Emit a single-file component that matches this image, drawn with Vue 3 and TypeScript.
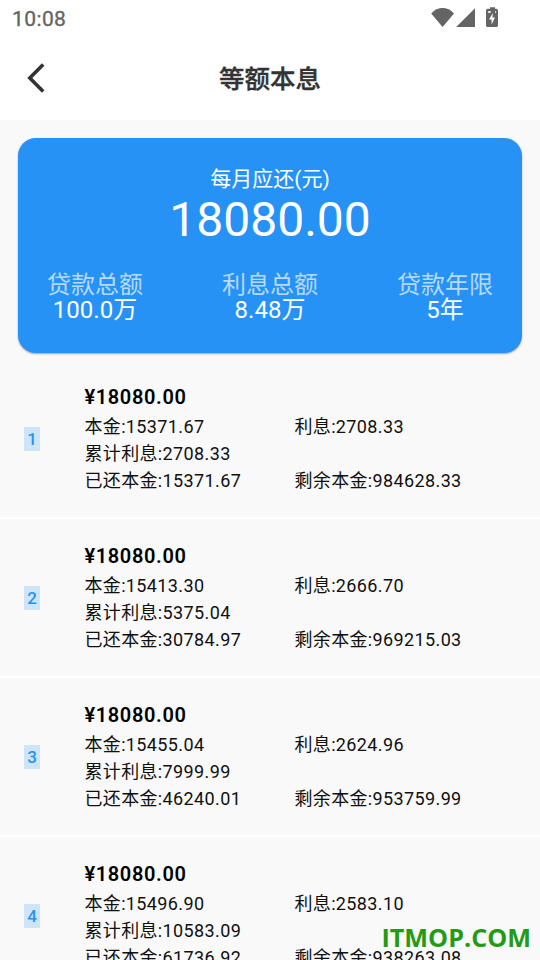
<script setup lang="ts">
interface Summary {
  label: string
  value: string
}

interface Installment {
  period: number
  payment: string
  principal: string
  interest: string
  totalInterest: string
  paidPrincipal: string
  remaining: string
}

const summaries: Summary[] = [
  { label: '贷款总额', value: '100.0万' },
  { label: '利息总额', value: '8.48万' },
  { label: '贷款年限', value: '5年' },
]

const installments: Installment[] = [
  { period: 1, payment: '18080.00', principal: '15371.67', interest: '2708.33', totalInterest: '2708.33', paidPrincipal: '15371.67', remaining: '984628.33' },
  { period: 2, payment: '18080.00', principal: '15413.30', interest: '2666.70', totalInterest: '5375.04', paidPrincipal: '30784.97', remaining: '969215.03' },
  { period: 3, payment: '18080.00', principal: '15455.04', interest: '2624.96', totalInterest: '7999.99', paidPrincipal: '46240.01', remaining: '953759.99' },
  { period: 4, payment: '18080.00', principal: '15496.90', interest: '2583.10', totalInterest: '10583.09', paidPrincipal: '61736.92', remaining: '938263.08' },
]
</script>

<template>
  <div class="screen">
    <header class="top">
      <div class="status">
        <span class="clock">10:08</span>
        <svg class="indicators" width="70" height="24" viewBox="0 0 70 24" fill="#646464">
          <path d="M1.2 5.4C8-1.8 17.2-1.8 24 5.4L12.6 19Z" />
          <path d="M45 .2V19H26.2Z" />
          <path fill-rule="evenodd" d="M60-.8h5v1.6h1.4q1.6 0 1.6 1.6v15q0 1.6-1.6 1.6h-8.8q-1.6 0-1.6-1.6v-15q0-1.6 1.6-1.6H60ZM62.8 5L59 11.6h2.6v5L65 9.6h-2.6Z" />
          <path fill="#fff" d="M58 3.2h2.8v1.5H58ZM65 3.2h1.1v1.5H65Z" />
        </svg>
      </div>
      <div class="nav">
        <svg class="back" width="20" height="32" viewBox="0 0 20 32" fill="none" stroke="#333" stroke-width="3.6">
          <path d="M17.2 2.5L3.8 16L17.2 29.5" />
        </svg>
        <h1 class="title">等额本息</h1>
      </div>
    </header>

    <section class="card">
      <div class="card-label">每月应还(元)</div>
      <div class="card-amount">18080.00</div>
      <div class="summaries">
        <div v-for="item in summaries" :key="item.label" class="summary">
          <div class="summary-label">{{ item.label }}</div>
          <div class="summary-value">{{ item.value }}</div>
        </div>
      </div>
    </section>

    <ul class="list">
      <li v-for="item in installments" :key="item.period" class="item">
        <span class="period">{{ item.period }}</span>
        <div class="details">
          <div class="payment">¥{{ item.payment }}</div>
          <div class="row">
            <span>本金:{{ item.principal }}</span>
            <span>利息:{{ item.interest }}</span>
          </div>
          <div class="row">
            <span>累计利息:{{ item.totalInterest }}</span>
          </div>
          <div class="row">
            <span>已还本金:{{ item.paidPrincipal }}</span>
            <span>剩余本金:{{ item.remaining }}</span>
          </div>
        </div>
      </li>
    </ul>

    <div class="watermark">ITMOP.COM</div>
  </div>
</template>

<style>
body {
  overflow: hidden;
}
</style>

<style scoped>
.screen {
  position: relative;
  width: 540px;
  height: 960px;
  overflow: hidden;
  background: #f9f9f9;
  color: #101010;
  font-family: Roboto, 'Noto Sans CJK SC', sans-serif;
}

.top {
  height: 120px;
  background: #fff;
}

.status {
  display: flex;
  justify-content: space-between;
  height: 36px;
  padding: 0 40px 0 12px;
}

.clock {
  color: #646464;
  font-size: 21px;
  font-weight: 400;
  line-height: 38px;
  letter-spacing: 0.4px;
  -webkit-text-stroke: 0.35px #646464;
}

.indicators {
  margin-top: 8px;
  overflow: visible;
}

.nav {
  display: grid;
  grid-template-columns: 60px 1fr 60px;
  align-items: center;
  height: 84px;
}

.back {
  margin-left: 26px;
}

.title {
  margin: 0;
  padding-top: 2px;
  color: #333;
  font-size: 25.5px;
  font-weight: 500;
  line-height: 36px;
  text-align: center;
  -webkit-text-stroke: 0.35px #333;
}

.card {
  box-sizing: border-box;
  height: 215px;
  margin: 18px 18px 0;
  padding: 28px 18px 0;
  border-radius: 18px;
  background: #2692f6;
  box-shadow: 0 1px 2px rgba(0, 0, 0, 0.35);
  color: #fff;
  text-align: center;
}

.card-label {
  font-size: 21px;
  line-height: 27px;
}

.card-amount {
  font-size: 48px;
  line-height: 54px;
}

.summaries {
  display: flex;
  justify-content: space-between;
  margin-top: 26px;
  padding: 0 11px;
  font-size: 24px;
  line-height: 25px;
}

.summary-label {
  color: #b7dafc;
}

.list {
  margin: 7px 0 0;
  padding: 0;
  list-style: none;
}

.item {
  box-sizing: border-box;
  display: flex;
  align-items: center;
  height: 159px;
  padding-left: 24px;
  border-bottom: 2px solid #fff;
}

.period {
  width: 16px;
  height: 24px;
  background: #cde4f9;
  color: #2692f6;
  font-size: 17px;
  font-weight: 500;
  line-height: 25px;
  text-align: center;
}

.details {
  flex: 1;
  margin-left: 44.4px;
  padding-bottom: 2px;
}

.payment {
  color: #000;
  font-size: 20px;
  font-weight: 600;
  line-height: 32px;
  letter-spacing: 0.65px;
}

.row {
  display: grid;
  grid-template-columns: 210px 1fr;
  font-size: 18px;
  line-height: 27px;
  letter-spacing: 0.37px;
}

.watermark {
  position: absolute;
  right: 9px;
  bottom: 6px;
  color: #259b15;
  font-family: 'Open Sans', 'Noto Sans', sans-serif;
  font-size: 25.2px;
  font-weight: 700;
  line-height: 34px;
}
</style>
